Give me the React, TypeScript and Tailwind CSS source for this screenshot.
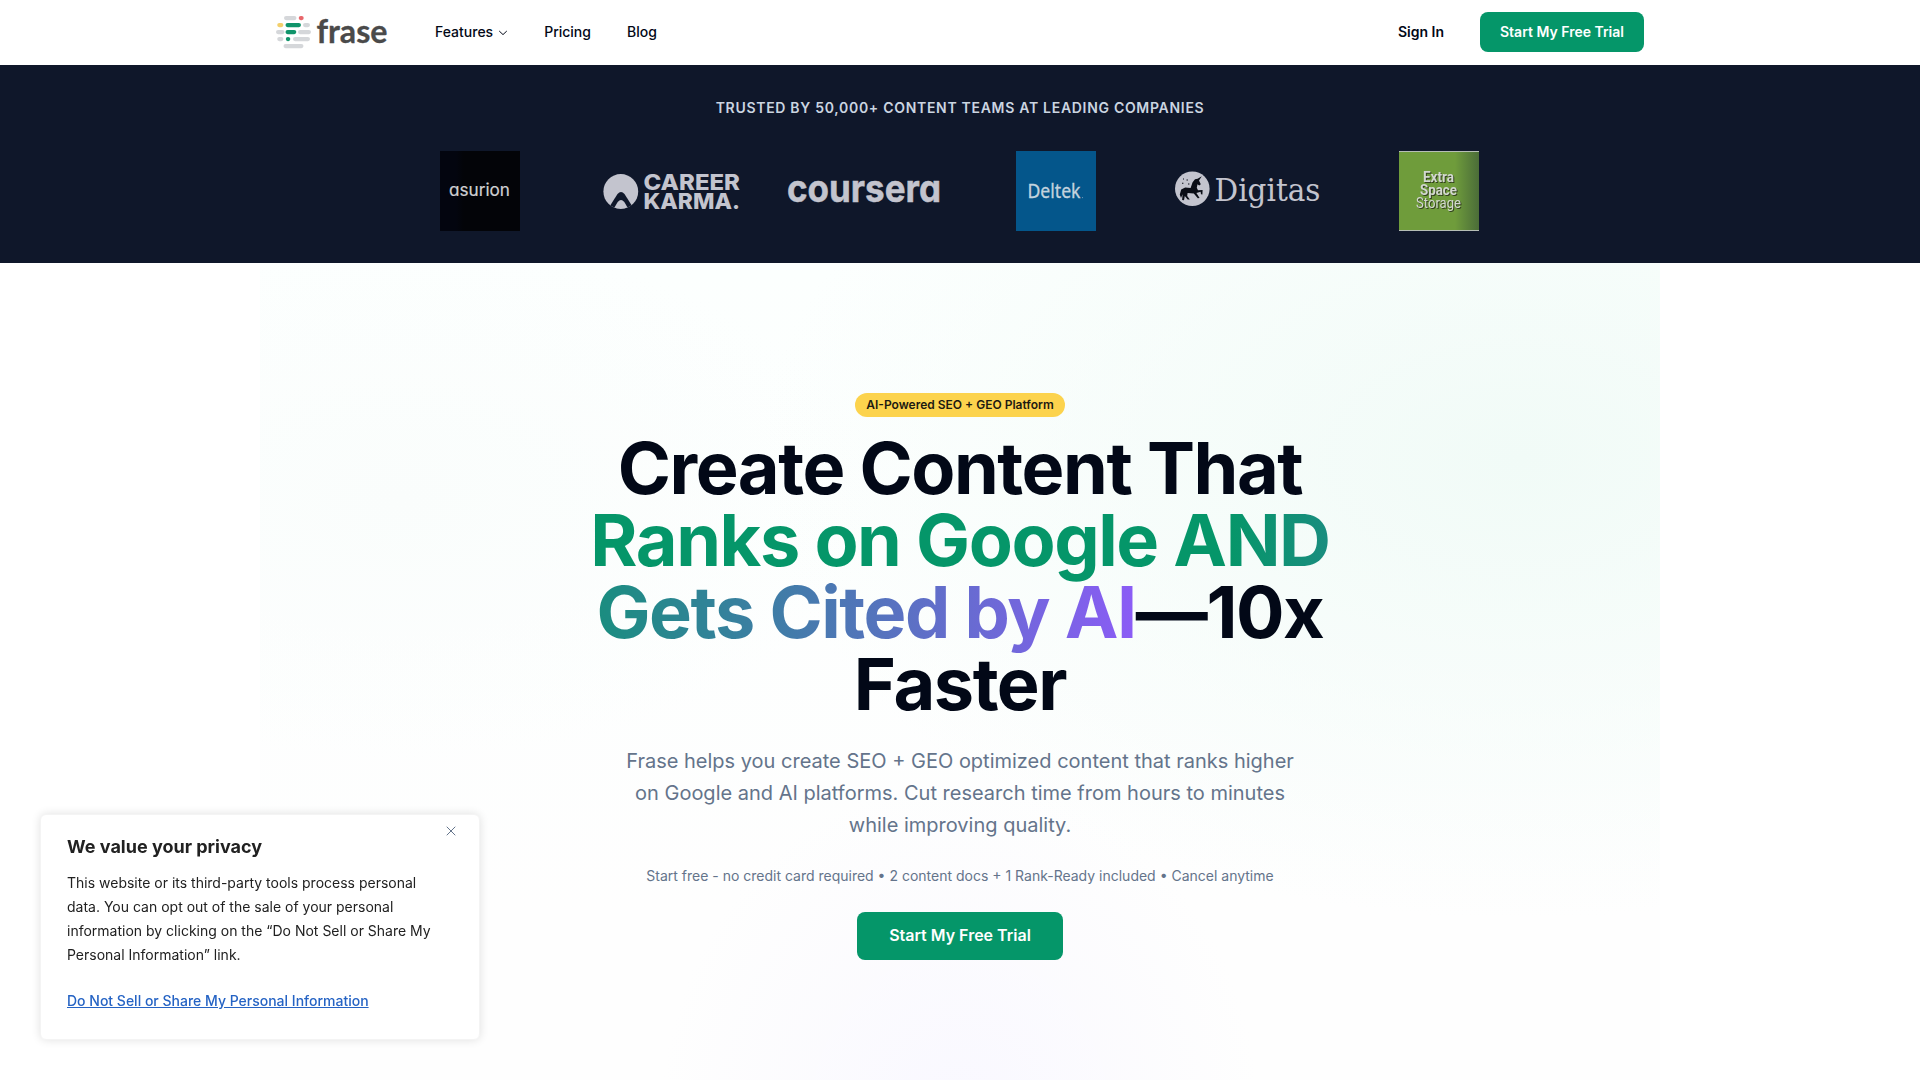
import React from "react";
import { X } from "lucide-react";

const pills: [number, number, number, string][] = [
  [8, 0, 12.5, "#d5d7da"], [22.7, 0, 5, "#e8666b"],
  [1.2, 7, 6.2, "#f3cf6b"], [9.5, 7, 15.5, "#10946a"], [27, 7, 7, "#d5d7da"],
  [0, 14, 8.5, "#d5d7da"], [9.5, 14, 10.8, "#10946a"], [22, 14, 13, "#d5d7da"],
  [1.2, 21, 6.2, "#d5d7da"], [9.8, 21, 4.5, "#10946a"], [17, 21, 17, "#d5d7da"],
  [7.5, 28, 20, "#d5d7da"],
];

function FraseLogo() {
  return (
    <svg width="114" height="40" viewBox="0 0 114 40" className="overflow-visible" aria-label="frase">
      {pills.map(([x, y, w, c], i) => (
        <rect key={i} x={x} y={y + 4} width={w} height="4.2" rx="2.1" fill={c} />
      ))}
      <text x="40.5" y="31.2" fontFamily="Lato, sans-serif" fontWeight="700" fontSize="32" fill="#4a4a4a" stroke="#4a4a4a" strokeWidth="0.3" textLength="71" lengthAdjust="spacingAndGlyphs">frase</text>
    </svg>
  );
}

function CareerKarma() {
  return (
    <svg width="138" height="40" viewBox="0 0 138 40" className="overflow-visible">
      <defs>
        <clipPath id="ck"><circle cx="17.8" cy="20.5" r="17.4" /></clipPath>
      </defs>
      <g clipPath="url(#ck)">
        <rect width="36" height="40" fill="#c3c4ce" />
        <path d="M5 38 L14.5 23 Q18 19 21.5 23 L31 38 Z" fill="#0f172a" />
        <path d="M10 39 L14.7 31 Q18 27 21.3 31 L26 39 Z" fill="#c3c4ce" />
      </g>
      <g fill="#c3c4ce" fontFamily="Inter, sans-serif" fontWeight="800" fontSize="22">
        <text x="40.5" y="19.3" textLength="96.5" lengthAdjust="spacingAndGlyphs">CAREER</text>
        <text x="40.5" y="37.6" textLength="96.5" lengthAdjust="spacingAndGlyphs">KARMA.</text>
      </g>
    </svg>
  );
}

function Coursera() {
  return (
    <svg width="154" height="40" viewBox="0 0 154 40" className="overflow-visible [font-feature-settings:'cv11']">
      <text x="0" y="31.4" fill="#c3c4ce" stroke="#c3c4ce" strokeWidth="0.5" fontFamily="Inter, sans-serif" fontWeight="700" fontSize="38" textLength="154" lengthAdjust="spacingAndGlyphs">coursera</text>
    </svg>
  );
}

function Digitas() {
  return (
    <svg width="146" height="44" viewBox="0 0 146 44" className="overflow-visible">
      <circle cx="17.3" cy="19.7" r="17.3" fill="#c3c4ce" />
      <path d="M26.8 7.2 L24 11.4 L25.8 15.2 L24.2 16.5 L22.5 15.3 L21.8 18.8 L23 21.2 L27.6 21 L27.4 25.4 L26 25.2 L25.6 22.8 L21.4 24 L24.6 29 L22.8 29.2 L18.8 24.4 L12.6 24 L12.2 27 L14.8 30.6 L12.7 30.4 L9.8 27 L9 31.2 L7.1 31 L7.6 25.2 L6 29 L4.8 25.6 L6.2 20.4 L10.2 18.6 L15.6 19 L17.6 13.2 L20 10.2 L22.6 9.8 Z" fill="#0a0d16" />
      <path d="M7 14.2h1.4M11.5 11h1.4M13 15h1.4M8 10h1" stroke="#0a0d16" strokeWidth="1.1" />
      <text x="39.5" y="31.7" fill="#c3c4ce" fontFamily="'DejaVu Serif', serif" fontSize="32" textLength="106" lengthAdjust="spacingAndGlyphs">Digitas</text>
    </svg>
  );
}

function Logos() {
  return (
    <div className="mx-auto grid h-20 w-[1151px] grid-cols-6 items-center justify-items-center">
      <div className="flex size-20 items-center justify-center bg-linear-to-r from-[#03050f] from-20% to-[#030408] to-30%">
        <svg width="62" height="22" viewBox="0 0 62 22" className="overflow-visible [font-feature-settings:'cv11']">
          <text x="0" y="16" fontFamily="Inter, sans-serif" fontSize="17" fontWeight="400" fill="#d0d0d2" stroke="#d0d0d2" strokeWidth="0.2" textLength="61" lengthAdjust="spacingAndGlyphs">asurion</text>
        </svg>
      </div>
      <CareerKarma />
      <Coursera />
      <div className="flex size-20 items-center justify-center bg-[#04568b]">
        <svg width="56" height="24" viewBox="0 0 56 24" className="overflow-visible">
          <text x="-0.5" y="19" fontFamily="'Noto Sans', sans-serif" fontSize="19.5" fill="#c3d3de" stroke="#c3d3de" strokeWidth="0.3" textLength="53" lengthAdjust="spacingAndGlyphs">Deltek</text>
          <circle cx="54.5" cy="18.6" r="0.6" fill="#6fa0bf" />
        </svg>
      </div>
      <Digitas />
      <div className="mr-0.5 flex size-20 flex-col items-center justify-center border-y border-[#b5bdb5] bg-linear-to-r from-[#6f9c3b] from-70% to-[#4b6d38] text-[#d3d8d0]">
        <svg width="52" height="42" viewBox="0 0 52 42" fontFamily="Roboto, sans-serif" fontSize="15" className="overflow-visible [filter:drop-shadow(1px_1px_0_#34421f)]">
          <text x="10" y="12" fontWeight="700" fill="currentColor" textLength="31" lengthAdjust="spacingAndGlyphs">Extra</text>
          <text x="7" y="25.3" fontWeight="700" fill="currentColor" textLength="37" lengthAdjust="spacingAndGlyphs">Space</text>
          <text x="3" y="38.2" fontWeight="400" fill="currentColor" textLength="45" lengthAdjust="spacingAndGlyphs">Storage</text>
        </svg>
      </div>
    </div>
  );
}

export default function App() {
  return (
    <div className="flex h-screen flex-col overflow-hidden bg-white font-['Inter',sans-serif] text-[#020817]">
      <header className="h-[65px] shrink-0">
        <div className="mx-auto flex h-16 w-[1368px] items-center">
          <FraseLogo />
          <nav className="ml-[45px] flex items-center gap-9 text-sm font-medium">
            <a className="flex items-center gap-[5px]">
              Features
              <svg width="10" height="10" viewBox="0 0 10 10" fill="none" stroke="currentColor" strokeWidth="1" strokeLinecap="round" strokeLinejoin="round">
                <path d="M1.5 4.3 L5 7.6 L8.5 4.3" />
              </svg>
            </a>
            <a>Pricing</a>
            <a>Blog</a>
          </nav>
          <div className="ml-auto flex items-center gap-9 text-sm font-semibold">
            <a>Sign In</a>
            <button className="h-10 w-[164px] rounded-lg bg-[#059669] text-white">Start My Free Trial</button>
          </div>
        </div>
      </header>

      <section className="h-[198px] shrink-0 bg-[#0f172a] pt-8">
        <p className="mb-[33px] pt-[1px] text-center text-sm font-semibold tracking-wider text-[#cbd5e1] uppercase">
          Trusted by 50,000+ content teams at leading companies
        </p>
        <Logos />
      </section>

      <main className="mx-auto flex w-[1400px] grow flex-col items-center bg-[radial-gradient(ellipse_760px_460px_at_90%_24%,#f1fbf7_0%,transparent_100%),radial-gradient(ellipse_300px_340px_at_50%_105%,#f9f8ff_0%,transparent_100%),radial-gradient(ellipse_480px_260px_at_10%_29%,#fafdfc_0%,transparent_100%),linear-gradient(180deg,#fcfffe,#fefefe_80%)] pt-[130px]">
        <span className="flex h-6 w-[210px] items-center justify-center rounded-full bg-[#fcd34d] text-xs font-semibold text-[#1c1a12]">
          AI-Powered SEO + GEO Platform
        </span>
        <h1 className="mt-[15px] mb-px text-center text-7xl leading-[72px] font-bold tracking-[-0.02em]">
          Create Content That
          <br />
          <span className="bg-linear-to-r/srgb from-[#059669] from-50% to-[#8b5cf6] bg-clip-text text-transparent">
            Ranks on Google AND
            <br />
            Gets Cited by AI
          </span>
          —10x
          <br />
          Faster
        </h1>
        <p className="mt-6 w-[680px] text-center text-xl leading-8 text-[#64748b]">
          Frase helps you create SEO + GEO optimized content that ranks higher on Google and AI platforms. Cut research time from hours to minutes while improving quality.
        </p>
        <p className="mt-[25px] text-sm text-[#64748b]">
          Start free - no credit card required • 2 content docs + 1 Rank-Ready included • Cancel anytime
        </p>
        <button className="mt-[26px] h-12 w-[206px] shrink-0 rounded-lg bg-[#059669] pb-0.5 text-base font-semibold text-white">
          Start My Free Trial
        </button>
      </main>

      <aside className="fixed bottom-10 left-10 h-[226px] w-[440px] rounded-md border border-[#f4f4f4] bg-white px-[26px] pt-5 text-[#212121] shadow-[0_0_10px_rgba(0,0,0,0.12)]">
        <X size={16} strokeWidth={1.5} className="absolute top-2 right-5 text-[#64748b]" />
        <h2 className="text-lg leading-6 font-bold">We value your privacy</h2>
        <p className="mt-3 text-sm leading-6">
          This website or its third-party tools process personal data. You can opt out of the sale of your personal information by clicking on the “Do Not Sell or Share My Personal Information” link.
        </p>
        <a className="mt-[22px] block text-sm leading-6 font-medium text-[#2563c4] underline">
          Do Not Sell or Share My Personal Information
        </a>
      </aside>
    </div>
  );
}
